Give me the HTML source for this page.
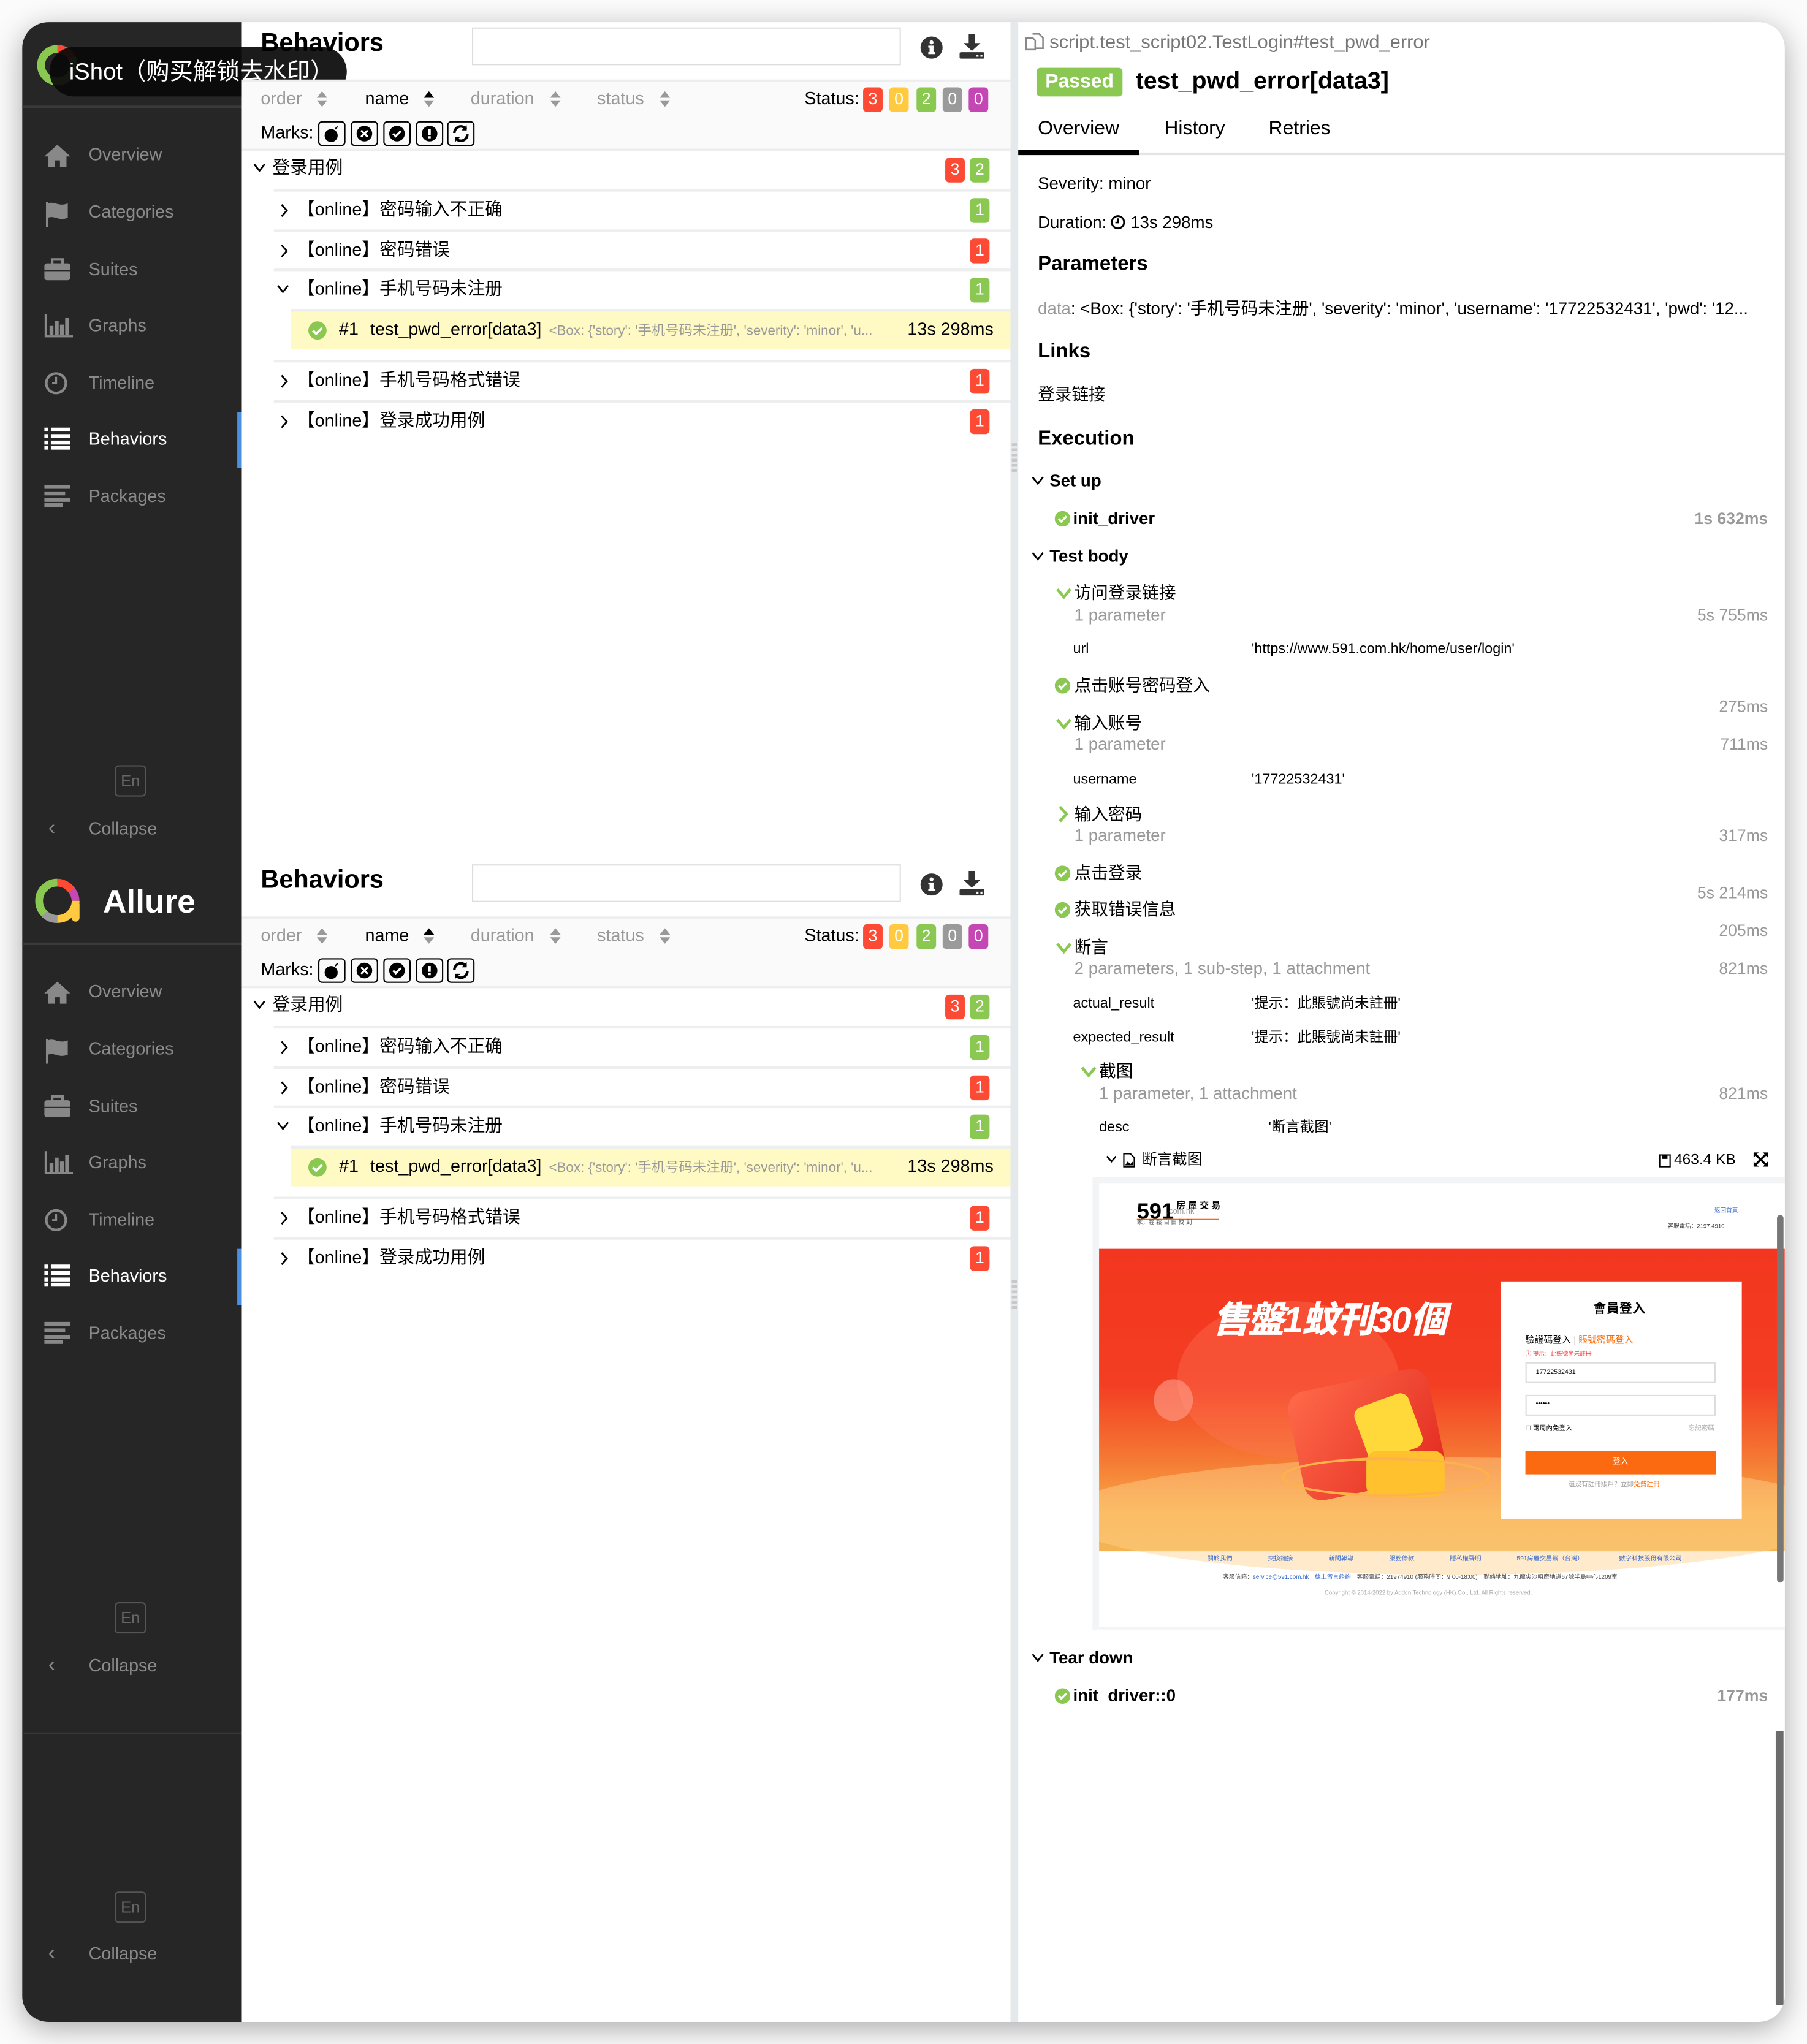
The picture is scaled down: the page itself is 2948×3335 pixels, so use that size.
<!DOCTYPE html>
<html><head><meta charset="utf-8">
<style>
body{margin:0;width:2948px;height:3335px;overflow:hidden;background:#fff}
#s{position:absolute;left:0;top:0;width:1386px;height:1568px;transform:scale(2.12698);transform-origin:0 0;font-family:"Liberation Sans","Noto Sans CJK SC",sans-serif;color:#000;background:#fbfbfb}
#w{position:absolute;left:17px;top:17px;width:1352px;height:1534px;border-radius:20px;overflow:hidden;background:#fff;box-shadow:0 5px 22px rgba(0,0,0,.32)}
#i{position:absolute;left:-17px;top:-17px;width:1386px;height:1568px}
.a{position:absolute;white-space:nowrap;line-height:18px}
.cp{position:absolute;left:0;width:1386px;height:660px}
.nav{position:absolute;left:68px;font-size:13.5px;color:#8a8a8a;line-height:18px}
.ic{position:absolute;left:34px}
.b{position:absolute;width:15px;height:19px;border-radius:3px;color:#fff;font-size:12.5px;text-align:center;line-height:19px}
.r{background:#fd4a34}.y{background:#ffc940}.g{background:#8bc852}.gy{background:#9a9a9a}.m{background:#c447b4}
.ln{position:absolute;height:2px;background:#eceef0}
.mk{position:absolute;width:19px;height:17px;border:1.5px solid #000;border-radius:3px;top:0}
.gr{color:#999}
.rt{position:absolute;right:30px;text-align:right;font-size:12.5px;color:#999;line-height:16px}
.k{position:absolute;font-size:11px;line-height:14px}
.st{font-size:13px}
</style></head><body>
<div id="s">
<div id="w"><div id="i">

<!-- SIDEBAR -->
<div style="position:absolute;left:17px;top:0;width:168px;height:1568px;background:#262626"></div>
<div style="position:absolute;left:17px;top:1329px;width:168px;height:1px;background:#3a3a3a"></div>

<!-- sidebar copies -->
<div class="cp" style="top:15px">
 <div style="position:absolute;left:17px;top:66px;width:168px;height:2px;background:#3a3a3a"></div>
 <svg style="position:absolute;left:28px;top:18px" width="34" height="34" viewBox="0 0 34 34"><circle cx="16" cy="17" r="12.5" fill="none" stroke="#8bc852" stroke-width="6"/><path d="M16 4.5A12.5 12.5 0 0 1 27 11" fill="none" stroke="#fd4a34" stroke-width="6"/></svg>
 <div class="ic" style="top:95px"><svg width="20" height="18"><path d="M10 1L0 10h3v8h5v-5h4v5h5v-8h3z" fill="#888"/></svg></div><div class="nav" style="top:95px">Overview</div>
 <div class="ic" style="top:139px"><svg width="20" height="20"><path d="M2 1v19" stroke="#888" stroke-width="1.5"/><path d="M3 2c5-2 8 3 15 0v11c-7 3-10-2-15 0z" fill="#888"/></svg></div><div class="nav" style="top:139px">Categories</div>
 <div class="ic" style="top:183px"><svg width="20" height="18"><rect x="0" y="4" width="20" height="13" rx="2" fill="#888"/><rect x="6" y="1" width="8" height="4" fill="none" stroke="#888" stroke-width="2"/><rect x="0" y="9" width="20" height="1" fill="#262626"/></svg></div><div class="nav" style="top:183px">Suites</div>
 <div class="ic" style="top:226px"><svg width="22" height="18"><path d="M1 0v17h21" stroke="#888" stroke-width="1.5" fill="none"/><rect x="4" y="9" width="3" height="7" fill="#888"/><rect x="8" y="5" width="3" height="11" fill="#888"/><rect x="12" y="8" width="3" height="8" fill="#888"/><rect x="16" y="3" width="3" height="13" fill="#888"/></svg></div><div class="nav" style="top:226px">Graphs</div>
 <div class="ic" style="top:270px"><svg width="18" height="18"><circle cx="9" cy="9" r="7.5" fill="none" stroke="#888" stroke-width="2"/><path d="M9 4v5H6" stroke="#888" stroke-width="1.6" fill="none"/></svg></div><div class="nav" style="top:270px">Timeline</div>
 <div style="position:absolute;left:182px;top:301px;width:3px;height:43px;background:#4a90e2"></div>
 <div class="ic" style="top:313px"><svg width="20" height="17"><g fill="#fff"><rect y="0" width="3" height="3"/><rect x="5" y="0" width="15" height="3"/><rect y="5" width="3" height="3"/><rect x="5" y="5" width="15" height="3"/><rect y="10" width="3" height="3"/><rect x="5" y="10" width="15" height="3"/><rect y="14" width="3" height="3"/><rect x="5" y="14" width="15" height="3"/></g></svg></div><div class="nav" style="top:313px;color:#fff">Behaviors</div>
 <div class="ic" style="top:357px"><svg width="20" height="17"><g fill="#888"><rect y="0" width="20" height="3"/><rect y="5" width="16" height="3"/><rect y="10" width="20" height="3"/><rect y="14" width="14" height="3"/></g></svg></div><div class="nav" style="top:357px">Packages</div>
 <div style="position:absolute;left:88px;top:572px;width:24px;height:24px;border:1px solid #555;border-radius:3px;box-sizing:border-box;color:#666;font-size:12px;text-align:center;line-height:22px">En</div>
 <div class="a" style="left:37px;top:612px;color:#888;font-size:16px">&#8249;</div><div class="nav" style="top:612px">Collapse</div>
</div>

<div class="cp" style="top:657px">
 <div style="position:absolute;left:17px;top:66px;width:168px;height:2px;background:#3a3a3a"></div>
 <svg style="position:absolute;left:27px;top:17px" width="36" height="36" viewBox="0 0 36 36"><path d="M17 3A14 14 0 0 0 17 31" fill="none" stroke="#8bc852" stroke-width="6"/><path d="M17 3A14 14 0 0 1 28 9" fill="none" stroke="#fd4a34" stroke-width="6"/><path d="M28 9A14 14 0 0 1 31 17" fill="none" stroke="#c447b4" stroke-width="6"/><path d="M31 17A14 14 0 0 1 17 31" fill="none" stroke="#ffc940" stroke-width="6"/><path d="M7 27A14 14 0 0 0 17 31" fill="none" stroke="#9a9a9a" stroke-width="6"/><rect x="28" y="17" width="6" height="16" rx="3" fill="#ffc940"/></svg>
 <div class="a" style="left:79px;top:19px;color:#fff;font-size:25px;font-weight:bold;line-height:32px">Allure</div>
 <div class="ic" style="top:95px"><svg width="20" height="18"><path d="M10 1L0 10h3v8h5v-5h4v5h5v-8h3z" fill="#888"/></svg></div><div class="nav" style="top:95px">Overview</div>
 <div class="ic" style="top:139px"><svg width="20" height="20"><path d="M2 1v19" stroke="#888" stroke-width="1.5"/><path d="M3 2c5-2 8 3 15 0v11c-7 3-10-2-15 0z" fill="#888"/></svg></div><div class="nav" style="top:139px">Categories</div>
 <div class="ic" style="top:183px"><svg width="20" height="18"><rect x="0" y="4" width="20" height="13" rx="2" fill="#888"/><rect x="6" y="1" width="8" height="4" fill="none" stroke="#888" stroke-width="2"/><rect x="0" y="9" width="20" height="1" fill="#262626"/></svg></div><div class="nav" style="top:183px">Suites</div>
 <div class="ic" style="top:226px"><svg width="22" height="18"><path d="M1 0v17h21" stroke="#888" stroke-width="1.5" fill="none"/><rect x="4" y="9" width="3" height="7" fill="#888"/><rect x="8" y="5" width="3" height="11" fill="#888"/><rect x="12" y="8" width="3" height="8" fill="#888"/><rect x="16" y="3" width="3" height="13" fill="#888"/></svg></div><div class="nav" style="top:226px">Graphs</div>
 <div class="ic" style="top:270px"><svg width="18" height="18"><circle cx="9" cy="9" r="7.5" fill="none" stroke="#888" stroke-width="2"/><path d="M9 4v5H6" stroke="#888" stroke-width="1.6" fill="none"/></svg></div><div class="nav" style="top:270px">Timeline</div>
 <div style="position:absolute;left:182px;top:301px;width:3px;height:43px;background:#4a90e2"></div>
 <div class="ic" style="top:313px"><svg width="20" height="17"><g fill="#fff"><rect y="0" width="3" height="3"/><rect x="5" y="0" width="15" height="3"/><rect y="5" width="3" height="3"/><rect x="5" y="5" width="15" height="3"/><rect y="10" width="3" height="3"/><rect x="5" y="10" width="15" height="3"/><rect y="14" width="3" height="3"/><rect x="5" y="14" width="15" height="3"/></g></svg></div><div class="nav" style="top:313px;color:#fff">Behaviors</div>
 <div class="ic" style="top:357px"><svg width="20" height="17"><g fill="#888"><rect y="0" width="20" height="3"/><rect y="5" width="16" height="3"/><rect y="10" width="20" height="3"/><rect y="14" width="14" height="3"/></g></svg></div><div class="nav" style="top:357px">Packages</div>
 <div style="position:absolute;left:88px;top:572px;width:24px;height:24px;border:1px solid #555;border-radius:3px;box-sizing:border-box;color:#666;font-size:12px;text-align:center;line-height:22px">En</div>
 <div class="a" style="left:37px;top:612px;color:#888;font-size:16px">&#8249;</div><div class="nav" style="top:612px">Collapse</div>
</div>
<div style="position:absolute;left:88px;top:1451px;width:24px;height:24px;border:1px solid #555;border-radius:3px;box-sizing:border-box;color:#666;font-size:12px;text-align:center;line-height:22px">En</div>
<div class="a" style="left:37px;top:1490px;color:#888;font-size:16px">&#8249;</div><div class="nav" style="top:1490px">Collapse</div>

<!-- iShot watermark -->
<div style="position:absolute;left:38px;top:36px;width:228px;height:38px;border-radius:19px;background:rgba(10,10,10,.93)"></div>
<div class="a" style="left:53px;top:44px;color:#fff;font-size:18px;line-height:22px">iShot（购买解锁去水印）</div>

<!-- DIVIDER -->
<div style="position:absolute;left:775px;top:0;width:6px;height:1568px;background:#e6e9ec"></div>

<!-- MIDDLE COPIES -->
<div class="cp" style="top:15px">
 <div class="a" style="left:200px;top:6px;font-size:19.5px;font-weight:bold;line-height:24px">Behaviors</div>
 <div style="position:absolute;left:362px;top:6px;width:329px;height:29px;border:1px solid #ddd;box-sizing:border-box"></div>
 <svg style="position:absolute;left:706px;top:13px" width="17" height="17"><circle cx="8.5" cy="8.5" r="8.5" fill="#333"/><rect x="7" y="7" width="3" height="6" fill="#fff"/><rect x="6" y="7" width="4" height="1.5" fill="#fff"/><rect x="6" y="12" width="5" height="1.5" fill="#fff"/><circle cx="8.5" cy="4.5" r="1.5" fill="#fff"/></svg>
 <svg style="position:absolute;left:736px;top:11px" width="19" height="19"><path d="M7 0h5v7h4l-6.5 6L3 7h4z" fill="#333"/><rect x="0" y="14" width="19" height="5" rx="1" fill="#333"/><rect x="13" y="16" width="1.5" height="1.5" fill="#fff"/><rect x="16" y="16" width="1.5" height="1.5" fill="#fff"/></svg>
 <div style="position:absolute;left:185px;top:47px;width:590px;height:53px;background:#fafafa"></div>
 <div class="ln" style="left:185px;top:46px;width:590px"></div>
 <div class="ln" style="left:185px;top:99px;width:590px"></div>
 <div class="a" style="left:200px;top:52px;font-size:13.5px;color:#999">order</div><svg style="position:absolute;left:243px;top:55px" width="8" height="12"><path d="M4 0L8 5H0z M4 12L8 7H0z" fill="#999"/></svg>
 <div class="a" style="left:280px;top:52px;font-size:13.5px">name</div><svg style="position:absolute;left:325px;top:55px" width="8" height="12"><path d="M4 0L8 5H0z" fill="#000"/><path d="M4 12L8 7H0z" fill="#999"/></svg>
 <div class="a" style="left:361px;top:52px;font-size:13.5px;color:#999">duration</div><svg style="position:absolute;left:422px;top:55px" width="8" height="12"><path d="M4 0L8 5H0z M4 12L8 7H0z" fill="#999"/></svg>
 <div class="a" style="left:458px;top:52px;font-size:13.5px;color:#999">status</div><svg style="position:absolute;left:506px;top:55px" width="8" height="12"><path d="M4 0L8 5H0z M4 12L8 7H0z" fill="#999"/></svg>
 <div class="a" style="left:617px;top:52px;font-size:13.5px">Status:</div>
 <div class="b r" style="left:662px;top:52px">3</div><div class="b y" style="left:682px;top:52px">0</div><div class="b g" style="left:703px;top:52px">2</div><div class="b gy" style="left:723px;top:52px">0</div><div class="b m" style="left:743px;top:52px">0</div>
 <div class="a" style="left:200px;top:78px;font-size:13.5px">Marks:</div>
 <div style="position:absolute;left:244px;top:78px">
  <div class="mk" style="left:0"><svg width="19" height="17"><circle cx="9" cy="10" r="5" fill="#000"/><path d="M12 5l2-2" stroke="#000"/></svg></div>
  <div class="mk" style="left:25px"><svg width="19" height="17"><circle cx="9.5" cy="8.5" r="6" fill="#000"/><path d="M7 6l5 5M12 6l-5 5" stroke="#fff" stroke-width="1.5"/></svg></div>
  <div class="mk" style="left:50px"><svg width="19" height="17"><circle cx="9.5" cy="8.5" r="6" fill="#000"/><path d="M6.5 8.5l2 2 4-4" stroke="#fff" stroke-width="1.6" fill="none"/></svg></div>
  <div class="mk" style="left:75px"><svg width="19" height="17"><circle cx="9.5" cy="8.5" r="6" fill="#000"/><rect x="8.6" y="5" width="1.8" height="4.5" fill="#fff"/><rect x="8.6" y="10.5" width="1.8" height="1.6" fill="#fff"/></svg></div>
  <div class="mk" style="left:99px"><svg width="19" height="17"><path d="M4.5 8a5 5 0 0 1 9-3M14.5 9a5 5 0 0 1-9 3" stroke="#000" stroke-width="2" fill="none"/><path d="M14 2v4h-4zM5 15v-4h4z" fill="#000"/></svg></div>
 </div>
 <svg style="position:absolute;left:194px;top:110px" width="10" height="8"><path d="M1 1l4 5 4-5" stroke="#000" stroke-width="1.3" fill="none"/></svg>
 <div class="a" style="left:209px;top:105px;font-size:13.5px">登录用例</div>
 <div class="b r" style="left:725px;top:106px">3</div><div class="b g" style="left:744px;top:106px">2</div>
 <div class="ln" style="left:210px;top:130px;width:565px"></div>
 <div class="ln" style="left:210px;top:161px;width:565px"></div>
 <div class="ln" style="left:210px;top:191px;width:565px"></div>
 <div class="ln" style="left:210px;top:261px;width:565px"></div>
 <div class="ln" style="left:210px;top:292px;width:565px"></div>
 <svg style="position:absolute;left:214px;top:141px" width="8" height="11"><path d="M2 1l4 4.5-4 4.5" stroke="#000" stroke-width="1.3" fill="none"/></svg>
 <div class="a" style="left:228px;top:137px;font-size:13.5px">【online】密码输入不正确</div><div class="b g" style="left:744px;top:137px">1</div>
 <svg style="position:absolute;left:214px;top:172px" width="8" height="11"><path d="M2 1l4 4.5-4 4.5" stroke="#000" stroke-width="1.3" fill="none"/></svg>
 <div class="a" style="left:228px;top:168px;font-size:13.5px">【online】密码错误</div><div class="b r" style="left:744px;top:168px">1</div>
 <svg style="position:absolute;left:212px;top:203px" width="10" height="8"><path d="M1 1l4 5 4-5" stroke="#000" stroke-width="1.3" fill="none"/></svg>
 <div class="a" style="left:228px;top:198px;font-size:13.5px">【online】手机号码未注册</div><div class="b g" style="left:744px;top:198px">1</div>
 <div style="position:absolute;left:223px;top:222px;width:552px;height:31px;background:#fff9c4;border-top:2px solid #eceef0;box-sizing:border-box"></div>
 <svg style="position:absolute;left:236px;top:231px" width="15" height="15"><circle cx="7.5" cy="7.5" r="7" fill="#8bc852"/><path d="M4 7.5l2.5 2.5 4.5-4.5" stroke="#fff" stroke-width="1.8" fill="none"/></svg>
 <div class="a" style="left:260px;top:229px;font-size:13.5px">#1</div>
 <div class="a" style="left:284px;top:229px;font-size:13.5px">test_pwd_error[data3]</div>
 <div class="a" style="left:421px;top:230px;font-size:10.5px;color:#999">&lt;Box: {'story': '手机号码未注册', 'severity': 'minor', 'u...</div>
 <div class="a" style="left:696px;top:229px;font-size:13.5px">13s 298ms</div>
 <svg style="position:absolute;left:214px;top:272px" width="8" height="11"><path d="M2 1l4 4.5-4 4.5" stroke="#000" stroke-width="1.3" fill="none"/></svg>
 <div class="a" style="left:228px;top:268px;font-size:13.5px">【online】手机号码格式错误</div><div class="b r" style="left:744px;top:268px">1</div>
 <svg style="position:absolute;left:214px;top:303px" width="8" height="11"><path d="M2 1l4 4.5-4 4.5" stroke="#000" stroke-width="1.3" fill="none"/></svg>
 <div class="a" style="left:228px;top:299px;font-size:13.5px">【online】登录成功用例</div><div class="b r" style="left:744px;top:299px">1</div>
</div>

<div class="cp" style="top:657px">
 <div class="a" style="left:200px;top:6px;font-size:19.5px;font-weight:bold;line-height:24px">Behaviors</div>
 <div style="position:absolute;left:362px;top:6px;width:329px;height:29px;border:1px solid #ddd;box-sizing:border-box"></div>
 <svg style="position:absolute;left:706px;top:13px" width="17" height="17"><circle cx="8.5" cy="8.5" r="8.5" fill="#333"/><rect x="7" y="7" width="3" height="6" fill="#fff"/><rect x="6" y="7" width="4" height="1.5" fill="#fff"/><rect x="6" y="12" width="5" height="1.5" fill="#fff"/><circle cx="8.5" cy="4.5" r="1.5" fill="#fff"/></svg>
 <svg style="position:absolute;left:736px;top:11px" width="19" height="19"><path d="M7 0h5v7h4l-6.5 6L3 7h4z" fill="#333"/><rect x="0" y="14" width="19" height="5" rx="1" fill="#333"/><rect x="13" y="16" width="1.5" height="1.5" fill="#fff"/><rect x="16" y="16" width="1.5" height="1.5" fill="#fff"/></svg>
 <div style="position:absolute;left:185px;top:47px;width:590px;height:53px;background:#fafafa"></div>
 <div class="ln" style="left:185px;top:46px;width:590px"></div>
 <div class="ln" style="left:185px;top:99px;width:590px"></div>
 <div class="a" style="left:200px;top:52px;font-size:13.5px;color:#999">order</div><svg style="position:absolute;left:243px;top:55px" width="8" height="12"><path d="M4 0L8 5H0z M4 12L8 7H0z" fill="#999"/></svg>
 <div class="a" style="left:280px;top:52px;font-size:13.5px">name</div><svg style="position:absolute;left:325px;top:55px" width="8" height="12"><path d="M4 0L8 5H0z" fill="#000"/><path d="M4 12L8 7H0z" fill="#999"/></svg>
 <div class="a" style="left:361px;top:52px;font-size:13.5px;color:#999">duration</div><svg style="position:absolute;left:422px;top:55px" width="8" height="12"><path d="M4 0L8 5H0z M4 12L8 7H0z" fill="#999"/></svg>
 <div class="a" style="left:458px;top:52px;font-size:13.5px;color:#999">status</div><svg style="position:absolute;left:506px;top:55px" width="8" height="12"><path d="M4 0L8 5H0z M4 12L8 7H0z" fill="#999"/></svg>
 <div class="a" style="left:617px;top:52px;font-size:13.5px">Status:</div>
 <div class="b r" style="left:662px;top:52px">3</div><div class="b y" style="left:682px;top:52px">0</div><div class="b g" style="left:703px;top:52px">2</div><div class="b gy" style="left:723px;top:52px">0</div><div class="b m" style="left:743px;top:52px">0</div>
 <div class="a" style="left:200px;top:78px;font-size:13.5px">Marks:</div>
 <div style="position:absolute;left:244px;top:78px">
  <div class="mk" style="left:0"><svg width="19" height="17"><circle cx="9" cy="10" r="5" fill="#000"/><path d="M12 5l2-2" stroke="#000"/></svg></div>
  <div class="mk" style="left:25px"><svg width="19" height="17"><circle cx="9.5" cy="8.5" r="6" fill="#000"/><path d="M7 6l5 5M12 6l-5 5" stroke="#fff" stroke-width="1.5"/></svg></div>
  <div class="mk" style="left:50px"><svg width="19" height="17"><circle cx="9.5" cy="8.5" r="6" fill="#000"/><path d="M6.5 8.5l2 2 4-4" stroke="#fff" stroke-width="1.6" fill="none"/></svg></div>
  <div class="mk" style="left:75px"><svg width="19" height="17"><circle cx="9.5" cy="8.5" r="6" fill="#000"/><rect x="8.6" y="5" width="1.8" height="4.5" fill="#fff"/><rect x="8.6" y="10.5" width="1.8" height="1.6" fill="#fff"/></svg></div>
  <div class="mk" style="left:99px"><svg width="19" height="17"><path d="M4.5 8a5 5 0 0 1 9-3M14.5 9a5 5 0 0 1-9 3" stroke="#000" stroke-width="2" fill="none"/><path d="M14 2v4h-4zM5 15v-4h4z" fill="#000"/></svg></div>
 </div>
 <svg style="position:absolute;left:194px;top:110px" width="10" height="8"><path d="M1 1l4 5 4-5" stroke="#000" stroke-width="1.3" fill="none"/></svg>
 <div class="a" style="left:209px;top:105px;font-size:13.5px">登录用例</div>
 <div class="b r" style="left:725px;top:106px">3</div><div class="b g" style="left:744px;top:106px">2</div>
 <div class="ln" style="left:210px;top:130px;width:565px"></div>
 <div class="ln" style="left:210px;top:161px;width:565px"></div>
 <div class="ln" style="left:210px;top:191px;width:565px"></div>
 <div class="ln" style="left:210px;top:261px;width:565px"></div>
 <div class="ln" style="left:210px;top:292px;width:565px"></div>
 <svg style="position:absolute;left:214px;top:141px" width="8" height="11"><path d="M2 1l4 4.5-4 4.5" stroke="#000" stroke-width="1.3" fill="none"/></svg>
 <div class="a" style="left:228px;top:137px;font-size:13.5px">【online】密码输入不正确</div><div class="b g" style="left:744px;top:137px">1</div>
 <svg style="position:absolute;left:214px;top:172px" width="8" height="11"><path d="M2 1l4 4.5-4 4.5" stroke="#000" stroke-width="1.3" fill="none"/></svg>
 <div class="a" style="left:228px;top:168px;font-size:13.5px">【online】密码错误</div><div class="b r" style="left:744px;top:168px">1</div>
 <svg style="position:absolute;left:212px;top:203px" width="10" height="8"><path d="M1 1l4 5 4-5" stroke="#000" stroke-width="1.3" fill="none"/></svg>
 <div class="a" style="left:228px;top:198px;font-size:13.5px">【online】手机号码未注册</div><div class="b g" style="left:744px;top:198px">1</div>
 <div style="position:absolute;left:223px;top:222px;width:552px;height:31px;background:#fff9c4;border-top:2px solid #eceef0;box-sizing:border-box"></div>
 <svg style="position:absolute;left:236px;top:231px" width="15" height="15"><circle cx="7.5" cy="7.5" r="7" fill="#8bc852"/><path d="M4 7.5l2.5 2.5 4.5-4.5" stroke="#fff" stroke-width="1.8" fill="none"/></svg>
 <div class="a" style="left:260px;top:229px;font-size:13.5px">#1</div>
 <div class="a" style="left:284px;top:229px;font-size:13.5px">test_pwd_error[data3]</div>
 <div class="a" style="left:421px;top:230px;font-size:10.5px;color:#999">&lt;Box: {'story': '手机号码未注册', 'severity': 'minor', 'u...</div>
 <div class="a" style="left:696px;top:229px;font-size:13.5px">13s 298ms</div>
 <svg style="position:absolute;left:214px;top:272px" width="8" height="11"><path d="M2 1l4 4.5-4 4.5" stroke="#000" stroke-width="1.3" fill="none"/></svg>
 <div class="a" style="left:228px;top:268px;font-size:13.5px">【online】手机号码格式错误</div><div class="b r" style="left:744px;top:268px">1</div>
 <svg style="position:absolute;left:214px;top:303px" width="8" height="11"><path d="M2 1l4 4.5-4 4.5" stroke="#000" stroke-width="1.3" fill="none"/></svg>
 <div class="a" style="left:228px;top:299px;font-size:13.5px">【online】登录成功用例</div><div class="b r" style="left:744px;top:299px">1</div>
</div>
<!-- drag handles -->
<div style="position:absolute;left:776px;top:340px;width:4px;height:22px;background:repeating-linear-gradient(#c8c8c8 0 2px,transparent 2px 4px)"></div>
<div style="position:absolute;left:776px;top:982px;width:4px;height:22px;background:repeating-linear-gradient(#c8c8c8 0 2px,transparent 2px 4px)"></div>

<!-- RIGHT PANEL -->
<svg style="position:absolute;left:786px;top:25px" width="16" height="16"><path d="M1 4h5l2 2v7H1z M6 1h5l3 3v8H8" fill="none" stroke="#888" stroke-width="1.2"/></svg>
<div class="a" style="left:805px;top:24px;font-size:14.5px;color:#777">script.test_script02.TestLogin#test_pwd_error</div>
<div style="position:absolute;left:795px;top:52px;width:66px;height:22px;border-radius:3px;background:#8bc852;color:#fff;font-weight:bold;font-size:15px;text-align:center;line-height:22px">Passed</div>
<div class="a" style="left:871px;top:51px;font-size:18.5px;font-weight:bold;line-height:22px">test_pwd_error[data3]</div>
<div class="a" style="left:796px;top:89px;font-size:15px;line-height:20px">Overview</div>
<div class="a" style="left:893px;top:89px;font-size:15px;line-height:20px">History</div>
<div class="a" style="left:973px;top:89px;font-size:15px;line-height:20px">Retries</div>
<div style="position:absolute;left:781px;top:117px;width:588px;height:2px;background:#e2e4e6"></div>
<div style="position:absolute;left:781px;top:115px;width:93px;height:4px;background:#000"></div>

<div class="a st" style="left:796px;top:132px">Severity: minor</div>
<div class="a st" style="left:796px;top:162px">Duration: <svg width="11" height="11" style="vertical-align:-1px"><circle cx="5.5" cy="5.5" r="4.7" fill="none" stroke="#000" stroke-width="1.4"/><path d="M5.5 2.5v3.2H3.5" stroke="#000" stroke-width="1.2" fill="none"/></svg> 13s 298ms</div>
<div class="a" style="left:796px;top:193px;font-size:15.5px;font-weight:bold;line-height:20px">Parameters</div>
<div class="a st" style="left:796px;top:228px"><span class="gr">data</span>: &lt;Box: {'story': '手机号码未注册', 'severity': 'minor', 'username': '17722532431', 'pwd': '12...</div>
<div class="a" style="left:796px;top:260px;font-size:15.5px;font-weight:bold;line-height:20px">Links</div>
<div class="a st" style="left:796px;top:294px">登录链接</div>
<div class="a" style="left:796px;top:327px;font-size:15.5px;font-weight:bold;line-height:20px">Execution</div>

<svg style="position:absolute;left:791px;top:365px" width="10" height="8"><path d="M1 1l4 5 4-5" stroke="#000" stroke-width="1.3" fill="none"/></svg>
<div class="a st" style="left:805px;top:360px;font-weight:bold">Set up</div>
<svg style="position:absolute;left:809px;top:392px" width="12" height="12"><circle cx="6" cy="6" r="6" fill="#8bc852"/><path d="M3 6l2 2 4-4" stroke="#fff" stroke-width="1.6" fill="none"/></svg>
<div class="a st" style="left:823px;top:389px;font-weight:bold">init_driver</div>
<div class="rt" style="top:390px;font-weight:bold">1s 632ms</div>
<svg style="position:absolute;left:791px;top:423px" width="10" height="8"><path d="M1 1l4 5 4-5" stroke="#000" stroke-width="1.3" fill="none"/></svg>
<div class="a st" style="left:805px;top:418px;font-weight:bold">Test body</div>

<svg style="position:absolute;left:810px;top:451px" width="12" height="9"><path d="M1 1l5 6 5-6" stroke="#8bc852" stroke-width="2.2" fill="none"/></svg>
<div class="a st" style="left:824px;top:446px">访问登录链接</div>
<div class="a st gr" style="left:824px;top:463px">1 parameter</div><div class="rt" style="top:464px">5s 755ms</div>
<div class="k" style="left:823px;top:491px">url</div><div class="k" style="left:960px;top:491px">'https://www.591.com.hk/home/user/login'</div>

<svg style="position:absolute;left:809px;top:520px" width="12" height="12"><circle cx="6" cy="6" r="6" fill="#8bc852"/><path d="M3 6l2 2 4-4" stroke="#fff" stroke-width="1.6" fill="none"/></svg>
<div class="a st" style="left:824px;top:517px">点击账号密码登入</div>
<div class="rt" style="top:534px">275ms</div>

<svg style="position:absolute;left:810px;top:551px" width="12" height="9"><path d="M1 1l5 6 5-6" stroke="#8bc852" stroke-width="2.2" fill="none"/></svg>
<div class="a st" style="left:824px;top:546px">输入账号</div>
<div class="a st gr" style="left:824px;top:562px">1 parameter</div><div class="rt" style="top:563px">711ms</div>
<div class="k" style="left:823px;top:591px">username</div><div class="k" style="left:960px;top:591px">'17722532431'</div>

<svg style="position:absolute;left:811px;top:618px" width="9" height="13"><path d="M2 1l5 5.5-5 5.5" stroke="#8bc852" stroke-width="2.2" fill="none"/></svg>
<div class="a st" style="left:824px;top:616px">输入密码</div>
<div class="a st gr" style="left:824px;top:632px">1 parameter</div><div class="rt" style="top:633px">317ms</div>

<svg style="position:absolute;left:809px;top:664px" width="12" height="12"><circle cx="6" cy="6" r="6" fill="#8bc852"/><path d="M3 6l2 2 4-4" stroke="#fff" stroke-width="1.6" fill="none"/></svg>
<div class="a st" style="left:824px;top:661px">点击登录</div>
<div class="rt" style="top:677px">5s 214ms</div>
<svg style="position:absolute;left:809px;top:692px" width="12" height="12"><circle cx="6" cy="6" r="6" fill="#8bc852"/><path d="M3 6l2 2 4-4" stroke="#fff" stroke-width="1.6" fill="none"/></svg>
<div class="a st" style="left:824px;top:689px">获取错误信息</div>
<div class="rt" style="top:706px">205ms</div>

<svg style="position:absolute;left:810px;top:723px" width="12" height="9"><path d="M1 1l5 6 5-6" stroke="#8bc852" stroke-width="2.2" fill="none"/></svg>
<div class="a st" style="left:824px;top:718px">断言</div>
<div class="a st gr" style="left:824px;top:734px">2 parameters, 1 sub-step, 1 attachment</div><div class="rt" style="top:735px">821ms</div>
<div class="k" style="left:823px;top:763px">actual_result</div><div class="k" style="left:960px;top:763px">'提示：此賬號尚未註冊'</div>
<div class="k" style="left:823px;top:789px">expected_result</div><div class="k" style="left:960px;top:789px">'提示：此賬號尚未註冊'</div>

<svg style="position:absolute;left:829px;top:818px" width="12" height="9"><path d="M1 1l5 6 5-6" stroke="#8bc852" stroke-width="2.2" fill="none"/></svg>
<div class="a st" style="left:843px;top:813px">截图</div>
<div class="a st gr" style="left:843px;top:830px">1 parameter, 1 attachment</div><div class="rt" style="top:831px">821ms</div>
<div class="k" style="left:843px;top:858px">desc</div><div class="k" style="left:973px;top:858px">'断言截图'</div>

<svg style="position:absolute;left:848px;top:886px" width="9" height="7"><path d="M1 1l3.5 4 3.5-4" stroke="#000" stroke-width="1.2" fill="none"/></svg>
<svg style="position:absolute;left:861px;top:884px" width="10" height="12"><path d="M1 1h5l3 3v7H1z" fill="none" stroke="#000"/><path d="M2 10l2-3 2 2 2-2v3z" fill="#000"/></svg>
<div class="a" style="left:876px;top:882px;font-size:11.5px;line-height:16px">断言截图</div>
<svg style="position:absolute;left:1272px;top:885px" width="10" height="11"><rect x="1" y="1" width="8" height="9" fill="none" stroke="#000"/><rect x="3" y="1" width="4" height="3" fill="#000"/></svg>
<div class="a" style="left:1284px;top:882px;font-size:11.5px;line-height:16px">463.4 KB</div>
<svg style="position:absolute;left:1345px;top:884px" width="11" height="11"><path d="M1 1l9 9M10 1l-9 9" stroke="#000" stroke-width="1.6"/><path d="M0 0h4L0 4zM11 0H7l4 4zM0 11h4L0 7zM11 11H7l4-4z" fill="#000"/></svg>

<!-- attachment image -->
<div style="position:absolute;left:838px;top:903px;width:531px;height:347px;background:#f3f4f6"></div>
<div style="position:absolute;left:843px;top:908px;width:526px;height:340px;background:#fff;overflow:hidden">
 <div class="a" style="left:29px;top:8px;font-size:17px;font-weight:900;line-height:20px">591<span style="font-size:7px;font-weight:bold;vertical-align:8px"> 房 屋 交 易</span></div>
 <div class="a" style="left:52px;top:18px;font-size:6px;color:#999;line-height:8px">.com.hk</div>
 <div style="position:absolute;left:29px;top:27px;width:63px;height:1px;background:#f60"></div>
 <div class="a" style="left:29px;top:27px;font-size:4.5px;color:#555;line-height:6px">家，輕 鬆 自 由 找 到</div>
 <div class="a" style="left:472px;top:18px;font-size:4.5px;color:#3366cc;line-height:6px">返回首頁</div>
 <div class="a" style="left:436px;top:30px;font-size:4.5px;color:#333;line-height:6px">客服電話：2197 4910</div>
 <div style="position:absolute;left:0;top:50px;width:526px;height:232px;background:linear-gradient(180deg,#f3361f 0%,#f33e23 45%,#f57a34 70%,#f7ac48 88%,#f5b454 100%)"></div>
 <div style="position:absolute;left:60px;top:90px;width:170px;height:120px;border-radius:50%;background:rgba(255,120,90,.35)"></div>
 <div style="position:absolute;left:-30px;top:210px;width:600px;height:90px;border-radius:50%;background:rgba(255,210,140,.45)"></div>
 <div class="a" style="left:87px;top:88px;font-size:28px;font-weight:900;font-style:italic;color:#fff;line-height:34px;letter-spacing:-1px">售盤1蚊刊30個</div>
 <div style="position:absolute;left:150px;top:150px;width:110px;height:85px;border-radius:14px;background:linear-gradient(135deg,#ff6a4a,#e22a20);transform:rotate(-12deg)"></div>
 <div style="position:absolute;left:200px;top:165px;width:44px;height:44px;border-radius:7px;background:#ffd93a;transform:rotate(-20deg)"></div>
 <div style="position:absolute;left:205px;top:205px;width:60px;height:35px;border-radius:8px;background:#ffc12e"></div>
 <div style="position:absolute;left:140px;top:210px;width:160px;height:30px;border-radius:50%;border:2px solid #ffb24a;box-sizing:border-box"></div>
 <div style="position:absolute;left:42px;top:150px;width:30px;height:32px;border-radius:50%;background:rgba(255,160,140,.6)"></div>
 <div style="position:absolute;left:308px;top:75px;width:185px;height:182px;background:#fff"></div>
 <div class="a" style="left:379px;top:90px;font-size:10px;font-weight:bold;line-height:14px">會員登入</div>
 <div class="a" style="left:327px;top:116px;font-size:7px;line-height:9px">驗證碼登入 <span style="color:#ccc">|</span> <span style="color:#f60">賬號密碼登入</span></div>
 <div class="a" style="left:327px;top:128px;font-size:4.5px;color:#f33;line-height:6px">ⓘ 提示：此賬號尚未註冊</div>
 <div style="position:absolute;left:327px;top:137px;width:146px;height:16px;border:1px solid #ddd;box-sizing:border-box;font-size:5px;line-height:14px;padding-left:7px">17722532431</div>
 <div style="position:absolute;left:327px;top:162px;width:146px;height:16px;border:1px solid #ddd;box-sizing:border-box;font-size:5px;line-height:12px;padding-left:7px">••••••</div>
 <div class="a" style="left:327px;top:185px;font-size:5px;line-height:7px">☐ 兩周內免登入</div>
 <div class="a" style="left:452px;top:185px;font-size:5px;line-height:7px;color:#aaa">忘記密碼</div>
 <div style="position:absolute;left:327px;top:205px;width:146px;height:18px;background:#fb6a10;color:#fff;font-size:6px;line-height:18px;text-align:center">登入</div>
 <div class="a" style="left:360px;top:228px;font-size:5px;line-height:7px;color:#999">還沒有註冊賬戶？立即<span style="color:#f60">免費註冊</span></div>
 <div class="a" style="left:83px;top:286px;font-size:4.8px;line-height:6px;color:#3366cc;word-spacing:26px">關於我們 交換鏈接 新聞報導 服務條款 隱私權聲明 591房屋交易網（台灣） 數字科技股份有限公司</div>
 <div class="a" style="left:95px;top:299px;font-size:4.6px;line-height:6px;color:#444">客服信箱：<span style="color:#3366cc">service@591.com.hk　線上留言諮詢</span>　客服電話：21974910 (服務時間：9:00-18:00)　聯絡地址：九龍尖沙咀麼地道67號半島中心1209室</div>
 <div class="a" style="left:173px;top:311px;font-size:4.5px;line-height:6px;color:#aaa">Copyright © 2014-2022 by Addcn Technology (HK) Co., Ltd. All Rights reserved.</div>
</div>
<div style="position:absolute;left:1363px;top:932px;width:5px;height:282px;border-radius:3px;background:#777"></div>

<svg style="position:absolute;left:791px;top:1268px" width="10" height="8"><path d="M1 1l4 5 4-5" stroke="#000" stroke-width="1.3" fill="none"/></svg>
<div class="a st" style="left:805px;top:1263px;font-weight:bold">Tear down</div>
<svg style="position:absolute;left:809px;top:1295px" width="12" height="12"><circle cx="6" cy="6" r="6" fill="#8bc852"/><path d="M3 6l2 2 4-4" stroke="#fff" stroke-width="1.6" fill="none"/></svg>
<div class="a st" style="left:823px;top:1292px;font-weight:bold">init_driver::0</div>
<div class="rt" style="top:1293px;font-weight:bold">177ms</div>
<div style="position:absolute;left:1362px;top:1328px;width:6px;height:210px;background:#6b6b6b"></div>

</div></div>
</div>
</body></html>
